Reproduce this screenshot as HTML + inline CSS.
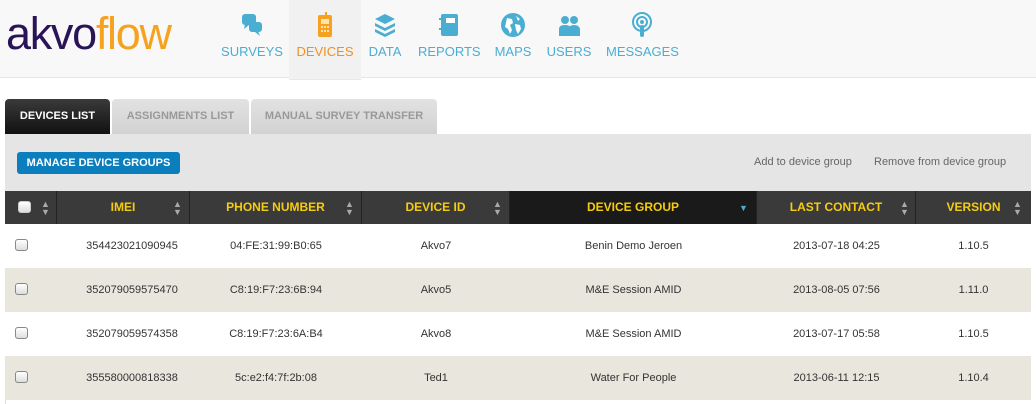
<!DOCTYPE html>
<html><head><meta charset="utf-8"><style>
*{box-sizing:border-box;margin:0;padding:0}
body{width:1036px;height:404px;overflow:hidden;background:#fff;font-family:"Liberation Sans",Helvetica,sans-serif;position:relative}
.hdr{position:absolute;left:0;top:0;width:1036px;height:78px;background:#f8f8f8;border-bottom:1px solid #e6e6e6}
.logo{position:absolute;left:6px;top:8px;font-size:45px;letter-spacing:-1.3px;font-weight:normal}
.logo .a{color:#2a1458}.logo .f{color:#f6a21e}
.nav{position:absolute;top:0;height:78px;text-align:center;font-size:13px;color:#4aaed3}
.nav .lbl{position:absolute;top:44px;left:0;right:0;white-space:nowrap}
.nav svg{position:absolute;top:12px;left:50%;margin-left:-12px}
.tab{position:absolute;top:99px;height:35px;font-size:11px;font-weight:bold;line-height:35px;text-align:center;border-radius:4px 4px 0 0}
.panel{position:absolute;left:5px;top:134px;width:1026px;height:57px;background:#e5e5e5}
.btn{position:absolute;left:17px;top:152px;width:163px;height:22px;background:#0b7fbd;border-radius:3px;color:#fff;font-size:11px;font-weight:bold;line-height:22px;text-align:center}
.lnk{position:absolute;top:156px;font-size:11px;color:#666}
.th{position:absolute;top:191px;height:33px;background:#3a3a3a;color:#f5cc12;font-size:12px;font-weight:bold;line-height:33px;text-align:center;border-right:1px solid #222}
.row{position:absolute;left:5px;width:1026px;height:44px}
.cell{position:absolute;font-size:11px;color:#333;line-height:44px;text-align:center}
.cb{position:absolute;left:15px;width:13px;height:12px;border:1px solid #888;border-radius:3px;background:linear-gradient(#fff,#ddd)}
</style></head><body>
<div class="hdr"></div>
<div class="logo"><span class="a">akvo</span><span class="f">flow</span></div>
<div style="position:absolute;left:289px;top:0;width:72px;height:80px;background:#f1f1f1;border-bottom:1px solid #e9e9e9"></div>
<div class="nav" style="left:220px;width:64px"><svg width="24" height="26" viewBox="0 0 24 26"><rect x="2" y="2" width="14" height="11" rx="3" fill="#4aaed3"/><rect x="9" y="10" width="13" height="10" rx="3" fill="#4aaed3"/><path d="M5 12l-1 5 5-4z M18 19l2 5-5-4z" fill="#4aaed3"/></svg><div class="lbl">SURVEYS</div></div>
<div class="nav" style="left:291px;width:68px;color:#f48e1c"><svg width="24" height="26" viewBox="0 0 24 26"><rect x="12" y="0" width="2" height="4" fill="#f6a21e"/><rect x="5" y="3" width="14" height="22" rx="2" fill="#f6a21e"/><rect x="8" y="7" width="8" height="5" fill="#fde2b0"/><g fill="#fde2b0"><rect x="8" y="14" width="2" height="2"/><rect x="11" y="14" width="2" height="2"/><rect x="14" y="14" width="2" height="2"/><rect x="8" y="18" width="2" height="2"/><rect x="11" y="18" width="2" height="2"/><rect x="14" y="18" width="2" height="2"/></g></svg><div class="lbl">DEVICES</div></div>
<div class="nav" style="left:366px;width:38px"><svg width="24" height="26" viewBox="0 0 24 26"><path d="M12 2l10 5-10 5-10-5z M2 11l10 5 10-5 0 3-10 5-10-5z M2 17l10 5 10-5 0 3-10 5-10-5z" fill="#4aaed3"/></svg><div class="lbl">DATA</div></div>
<div class="nav" style="left:418px;width:62px"><svg width="24" height="26" viewBox="0 0 24 26"><rect x="4" y="2" width="17" height="22" rx="2" fill="#4aaed3"/><rect x="9" y="6" width="9" height="5" fill="#fff"/><rect x="2" y="6" width="4" height="2" fill="#4aaed3"/><rect x="2" y="16" width="4" height="2" fill="#4aaed3"/></svg><div class="lbl">REPORTS</div></div>
<div class="nav" style="left:492px;width:42px"><svg width="24" height="26" viewBox="0 0 24 26"><circle cx="12" cy="13" r="12" fill="#4aaed3"/><path d="M6 6l5 1 1 4-3 2 2 5-2 4-2-5-3-2z M15 4l4 3-2 2z M14 12l5 1 1 4-3 5-2-4z" fill="#fff"/></svg><div class="lbl">MAPS</div></div>
<div class="nav" style="left:546px;width:46px"><svg width="24" height="26" viewBox="0 0 24 26"><circle cx="8" cy="8" r="4" fill="#4aaed3"/><circle cx="17" cy="8" r="4" fill="#4aaed3"/><path d="M2 24v-7q0-4 6-4t6 4v7z M12 24v-7q0-4 5-4t6 4v7z" fill="#4aaed3"/></svg><div class="lbl">USERS</div></div>
<div class="nav" style="left:606px;width:72px"><svg width="24" height="26" viewBox="0 0 24 26"><circle cx="12" cy="10" r="9" fill="none" stroke="#4aaed3" stroke-width="2"/><circle cx="12" cy="10" r="5" fill="none" stroke="#4aaed3" stroke-width="2"/><circle cx="12" cy="10" r="2" fill="#4aaed3"/><rect x="10" y="13" width="4" height="12" rx="2" fill="#4aaed3"/></svg><div class="lbl">MESSAGES</div></div>

<div class="tab" style="left:5px;width:105px;background:linear-gradient(#3a3a3a,#111);color:#fff">DEVICES LIST</div>
<div class="tab" style="left:112px;width:137px;background:linear-gradient(#e2e2e2,#d2d2d2);color:#999">ASSIGNMENTS LIST</div>
<div class="tab" style="left:251px;width:186px;background:linear-gradient(#e2e2e2,#d2d2d2);color:#999">MANUAL SURVEY TRANSFER</div>
<div class="panel"></div>
<div class="btn">MANAGE DEVICE GROUPS</div>
<div class="lnk" style="left:754px">Add to device group</div>
<div class="lnk" style="left:874px">Remove from device group</div>

<div class="th" style="left:5px;width:52px"></div>
<div class="cb" style="left:18px;top:201px;border-color:#ccc"></div>
<div class="th" style="left:57px;width:133px">IMEI</div>
<div class="th" style="left:190px;width:172px">PHONE NUMBER</div>
<div class="th" style="left:362px;width:148px">DEVICE ID</div>
<div class="th" style="left:510px;width:247px;background:#1a1a1a">DEVICE GROUP</div>
<div class="th" style="left:757px;width:159px">LAST CONTACT</div>
<div class="th" style="left:916px;width:115px;border-right:none">VERSION</div>
<div style="position:absolute;top:191px;left:0;font-size:9px;color:#aaa;line-height:8px">
<span style="position:absolute;left:41px;top:9px">▲<br>▼</span><span style="position:absolute;left:173px;top:9px">▲<br>▼</span><span style="position:absolute;left:345px;top:9px">▲<br>▼</span><span style="position:absolute;left:493px;top:9px">▲<br>▼</span><span style="position:absolute;left:739px;top:13px;color:#4aaed3">▼</span><span style="position:absolute;left:900px;top:9px">▲<br>▼</span><span style="position:absolute;left:1013px;top:9px">▲<br>▼</span></div>

<div style="position:absolute;left:5px;top:224px;width:1px;height:180px;background:#ddd"></div>
<div class="row" style="top:224px;background:#fff"></div>
<div class="row" style="top:268px;background:#e9e6de"></div>
<div class="row" style="top:312px;background:#fff"></div>
<div class="row" style="top:356px;background:#e9e6de"></div>

<div style="position:absolute;top:224px;left:0;width:1036px">
<div style="position:relative;height:44px"><div class="cb" style="top:15px"></div><div class="cell" style="left:57px;width:150px">354423021090945</div><div class="cell" style="left:190px;width:172px">04:FE:31:99:B0:65</div><div class="cell" style="left:362px;width:148px">Akvo7</div><div class="cell" style="left:510px;width:247px">Benin Demo Jeroen</div><div class="cell" style="left:757px;width:159px">2013-07-18 04:25</div><div class="cell" style="left:916px;width:115px">1.10.5</div></div>
<div style="position:relative;height:44px"><div class="cb" style="top:15px"></div><div class="cell" style="left:57px;width:150px">352079059575470</div><div class="cell" style="left:190px;width:172px">C8:19:F7:23:6B:94</div><div class="cell" style="left:362px;width:148px">Akvo5</div><div class="cell" style="left:510px;width:247px">M&amp;E Session AMID</div><div class="cell" style="left:757px;width:159px">2013-08-05 07:56</div><div class="cell" style="left:916px;width:115px">1.11.0</div></div>
<div style="position:relative;height:44px"><div class="cb" style="top:15px"></div><div class="cell" style="left:57px;width:150px">352079059574358</div><div class="cell" style="left:190px;width:172px">C8:19:F7:23:6A:B4</div><div class="cell" style="left:362px;width:148px">Akvo8</div><div class="cell" style="left:510px;width:247px">M&amp;E Session AMID</div><div class="cell" style="left:757px;width:159px">2013-07-17 05:58</div><div class="cell" style="left:916px;width:115px">1.10.5</div></div>
<div style="position:relative;height:44px"><div class="cb" style="top:15px"></div><div class="cell" style="left:57px;width:150px">355580000818338</div><div class="cell" style="left:190px;width:172px">5c:e2:f4:7f:2b:08</div><div class="cell" style="left:362px;width:148px">Ted1</div><div class="cell" style="left:510px;width:247px">Water For People</div><div class="cell" style="left:757px;width:159px">2013-06-11 12:15</div><div class="cell" style="left:916px;width:115px">1.10.4</div></div>
</div>
</body></html>
